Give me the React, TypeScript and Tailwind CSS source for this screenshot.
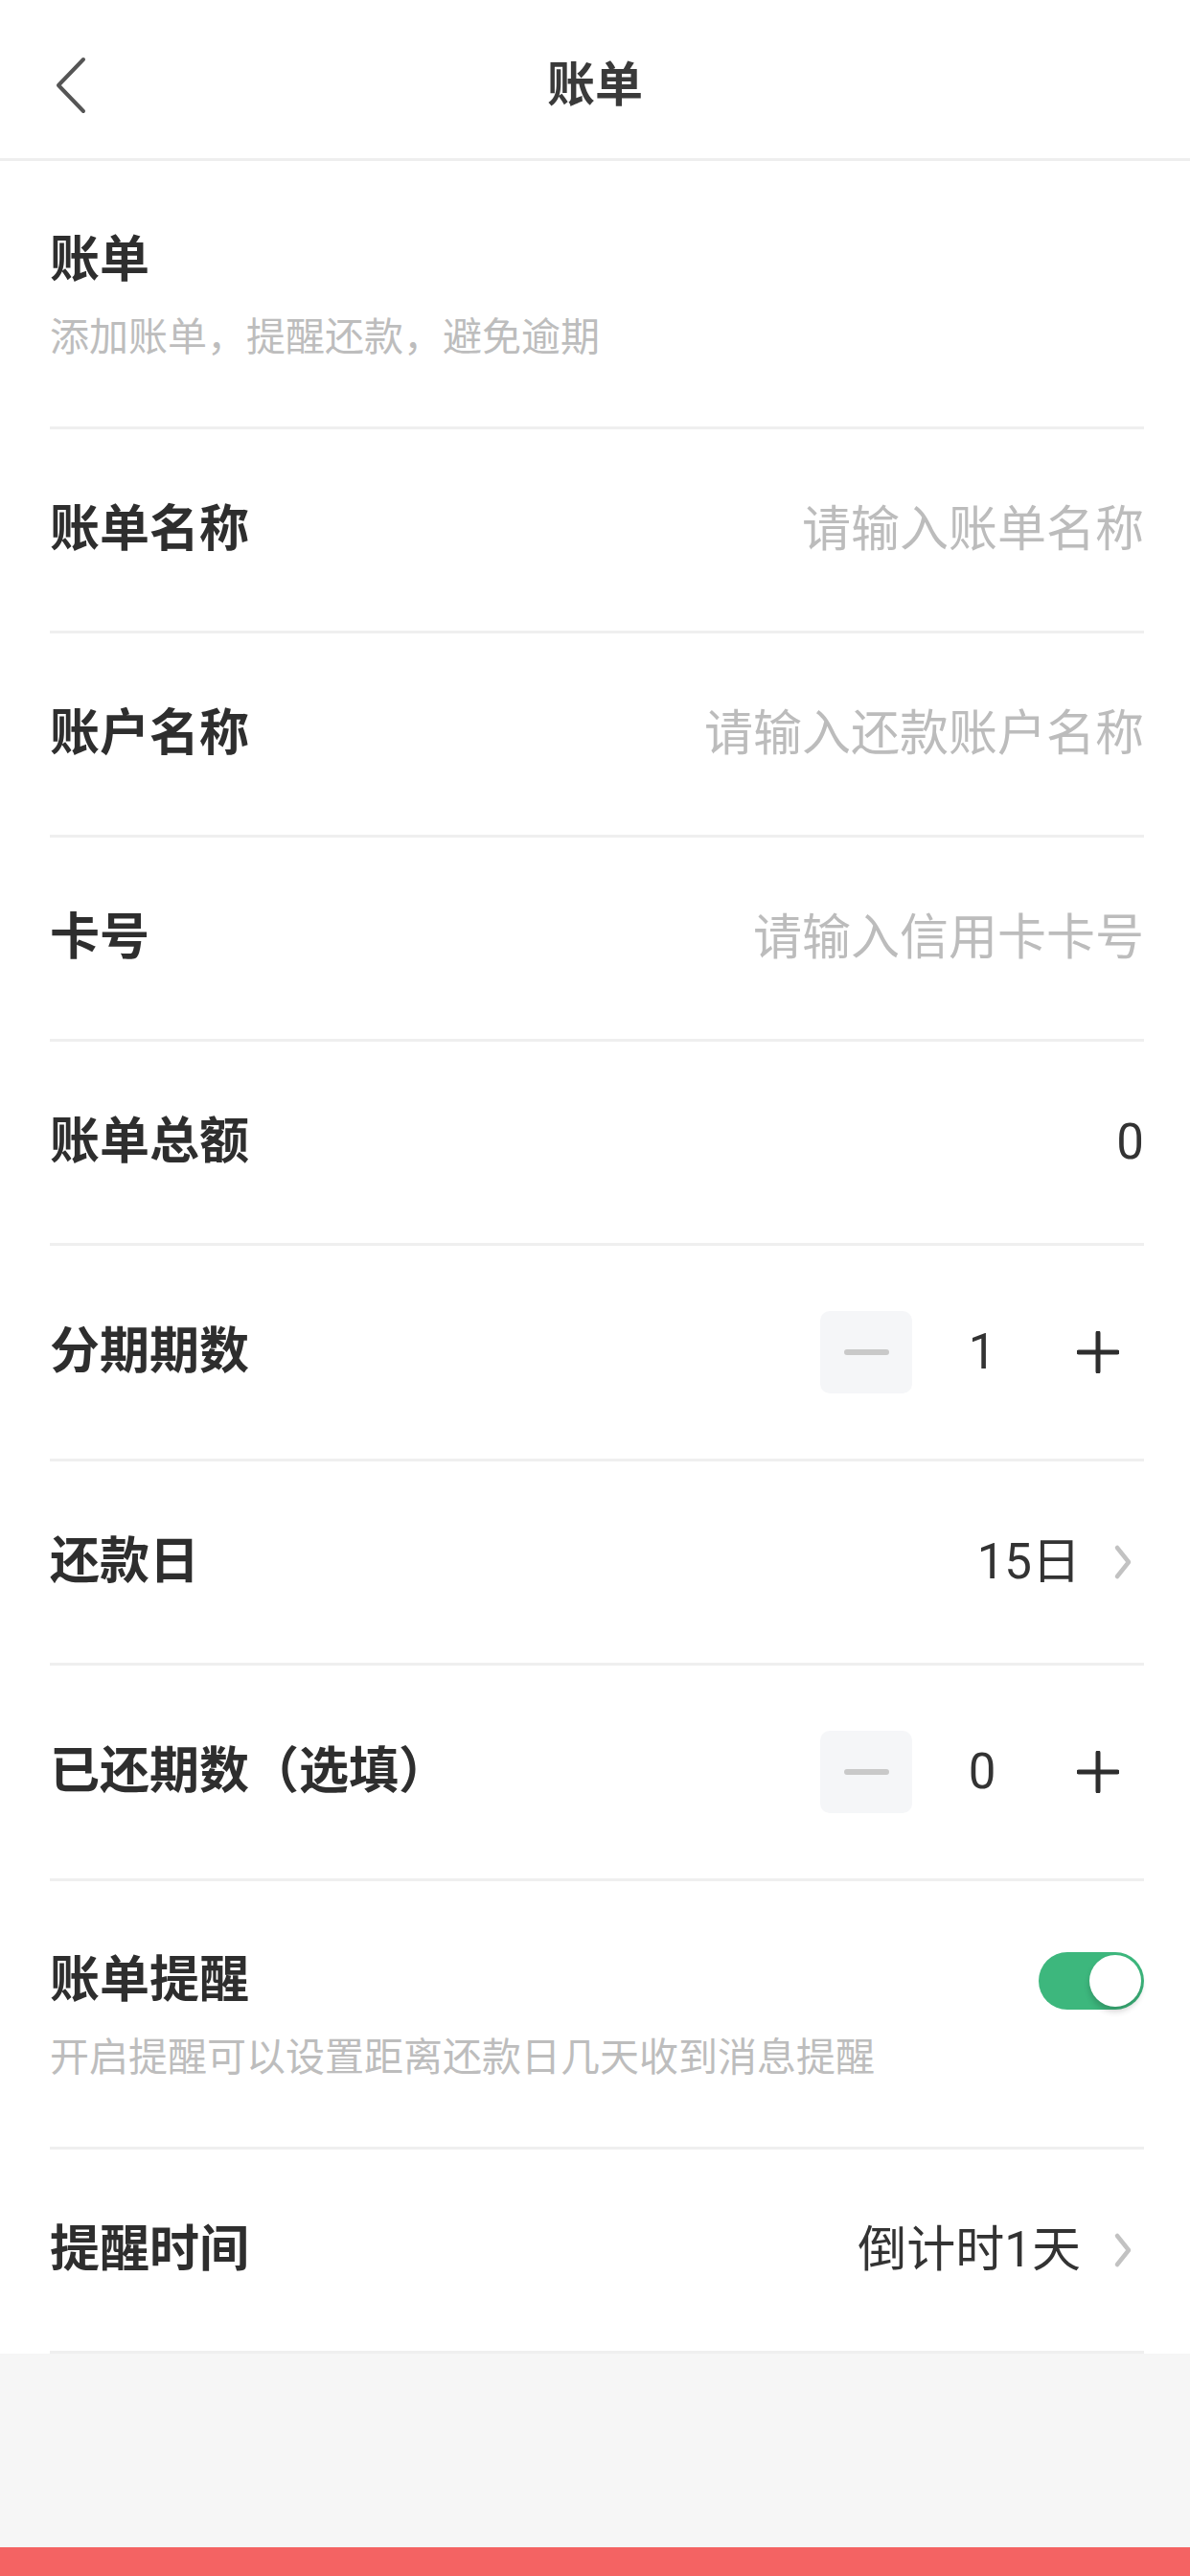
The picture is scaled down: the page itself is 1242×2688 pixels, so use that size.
import { useState } from "react";

const font = "font-['Roboto','Noto_Sans_CJK_SC',sans-serif]";

function ChevronRight() {
    return (
        <svg width="20" height="40" viewBox="0 0 20 40" className="ml-[34px] mr-[12px]">
            <path d="M4 5 L16 20 L4 35" fill="none" stroke="#c2c2c2" strokeWidth="4.5" strokeLinecap="round" strokeLinejoin="round" />
        </svg>
    );
}

type RowProps = {
    label: string;
    tall?: boolean;
    children?: React.ReactNode;
};

function Row({ label, tall, children }: RowProps) {
    return (
        <div
            className={`flex items-center justify-between border-b-[3px] border-[#efefef] ${tall ? "h-[225px]" : "h-[213px]"}`}
        >
            <span className="text-[52px] font-bold leading-[60px] text-[#2e2e2e]">{label}</span>
            <div className="flex items-center">{children}</div>
        </div>
    );
}

function Placeholder({ text }: { text: string }) {
    return <span className="text-[51px] leading-[60px] text-[#bcbcbc]">{text}</span>;
}

function Stepper({ value }: { value: number }) {
    return (
        <div className="flex items-center">
            <div className="flex h-[86px] w-[96px] items-center justify-center rounded-[10px] bg-[#f5f6f8]">
                <div className="h-[6px] w-[47px] rounded-full bg-[#c9c9c9]" />
            </div>
            <span className="w-[146px] text-center text-[51px] leading-[60px] text-[#333333]">{value}</span>
            <div className="flex h-[86px] w-[96px] items-center justify-center">
                <svg width="44" height="44" viewBox="0 0 44 44">
                    <path d="M22 2 V42 M2 22 H42" stroke="#2e2e2e" strokeWidth="5" strokeLinecap="round" />
                </svg>
            </div>
        </div>
    );
}

function Toggle() {
    const [on, setOn] = useState(true);
    return (
        <button
            onClick={() => setOn(!on)}
            className={`flex h-[60px] w-[110px] items-center rounded-full p-[3px] ${on ? "justify-end bg-[#3db77d]" : "justify-start bg-[#e5e5e5]"}`}
        >
            <div className="h-[54px] w-[54px] rounded-full bg-white shadow-[0_5px_6px_rgba(0,0,0,0.18)]" />
        </button>
    );
}

function App() {
    return (
        <div className={`flex h-[2688px] w-full flex-col bg-[#f6f6f6] ${font}`}>
            <header className="flex h-[168px] items-center border-b-[3px] border-[#eeeeee] bg-white pt-[12px]">
                <div className="w-[220px] pl-[56px]">
                    <svg width="36" height="60" viewBox="0 0 36 60">
                        <path d="M31 3 L5 30 L31 57" fill="none" stroke="#555555" strokeWidth="4" strokeLinecap="round" strokeLinejoin="round" />
                    </svg>
                </div>
                <h1 className="flex-1 text-center text-[50px] font-bold leading-[60px] text-[#3a3a3a]">账单</h1>
                <div className="w-[220px]" />
            </header>

            <div className="bg-white pl-[52px] pr-[48px]">
                <div className="h-[280px] border-b-[3px] border-[#efefef] pt-[74px]">
                    <div className="text-[52px] font-bold leading-[60px] text-[#2e2e2e]">账单</div>
                    <div className="mt-[25px] text-[41px] leading-[50px] text-[#bdbdbd]">添加账单，提醒还款，避免逾期</div>
                </div>

                <Row label="账单名称">
                    <Placeholder text="请输入账单名称" />
                </Row>
                <Row label="账户名称">
                    <Placeholder text="请输入还款账户名称" />
                </Row>
                <Row label="卡号">
                    <Placeholder text="请输入信用卡卡号" />
                </Row>
                <Row label="账单总额">
                    <span className="text-[51px] leading-[60px] text-[#333333]">0</span>
                </Row>
                <Row label="分期期数" tall>
                    <Stepper value={1} />
                </Row>
                <Row label="还款日">
                    <span className="text-[51px] leading-[60px] text-[#333333]">15日</span>
                    <ChevronRight />
                </Row>
                <Row label="已还期数（选填）" tall>
                    <Stepper value={0} />
                </Row>

                <div className="h-[280px] border-b-[3px] border-[#efefef] pt-[74px]">
                    <div className="flex items-center justify-between">
                        <span className="text-[52px] font-bold leading-[60px] text-[#2e2e2e]">账单提醒</span>
                        <Toggle />
                    </div>
                    <div className="mt-[25px] text-[41px] leading-[50px] text-[#bdbdbd]">
                        开启提醒可以设置距离还款日几天收到消息提醒
                    </div>
                </div>

                <Row label="提醒时间">
                    <span className="text-[51px] leading-[60px] text-[#333333]">倒计时1天</span>
                    <ChevronRight />
                </Row>
            </div>

            <div className="flex-1" />
            <div className="h-[30px] bg-[#f46363]" />
        </div>
    );
}

export default App;
